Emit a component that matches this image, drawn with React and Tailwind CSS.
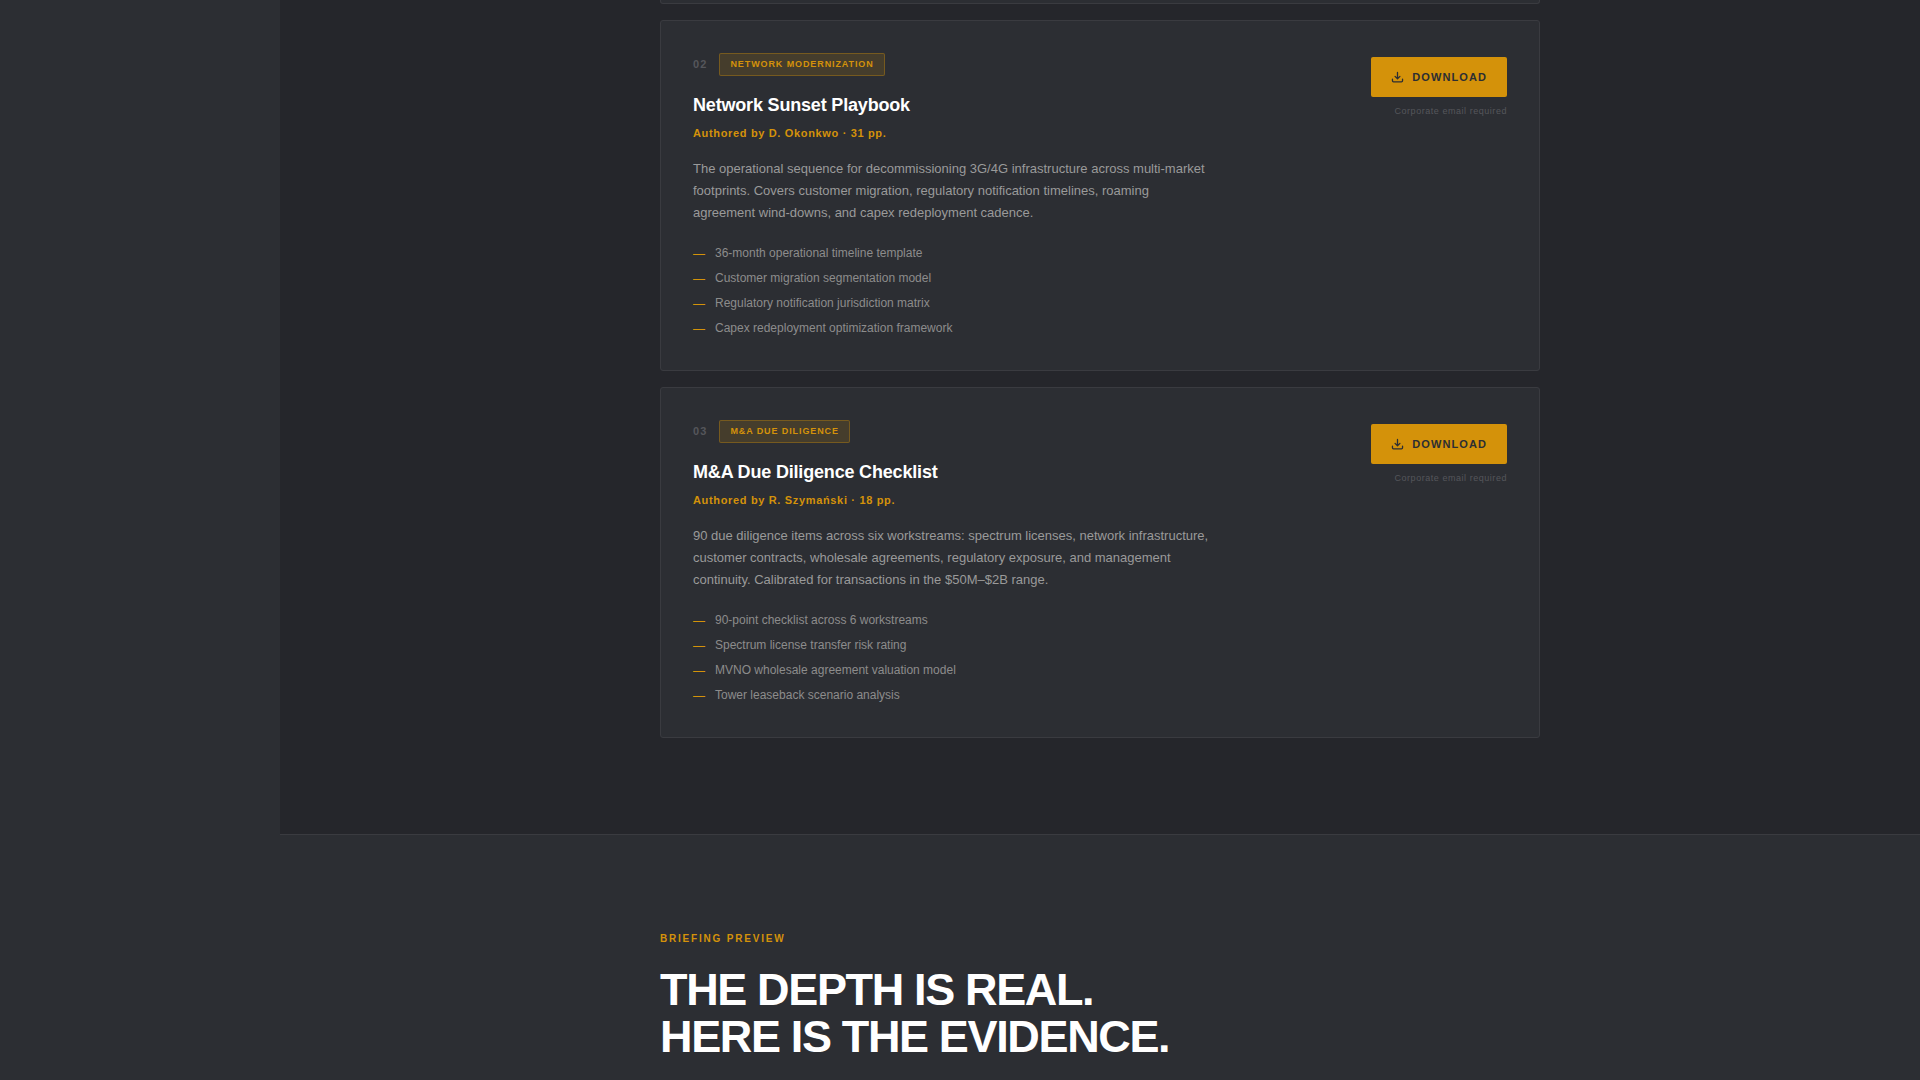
import React from 'react';

const playbooks = [
  {
    id: '02',
    tag: 'Network Modernization',
    title: 'Network Sunset Playbook',
    author: 'D. Okonkwo',
    pages: 31,
    description:
      'The operational sequence for decommissioning 3G/4G infrastructure across multi-market footprints. Covers customer migration, regulatory notification timelines, roaming agreement wind-downs, and capex redeployment cadence.',
    items: [
      '36-month operational timeline template',
      'Customer migration segmentation model',
      'Regulatory notification jurisdiction matrix',
      'Capex redeployment optimization framework'
    ]
  },
  {
    id: '03',
    tag: 'M&A Due Diligence',
    title: 'M&A Due Diligence Checklist',
    author: 'R. Szymański',
    pages: 18,
    description:
      '90 due diligence items across six workstreams: spectrum licenses, network infrastructure, customer contracts, wholesale agreements, regulatory exposure, and management continuity. Calibrated for transactions in the $50M–$2B range.',
    items: [
      '90-point checklist across 6 workstreams',
      'Spectrum license transfer risk rating',
      'MVNO wholesale agreement valuation model',
      'Tower leaseback scenario analysis'
    ]
  }
];

function DownloadIcon() {
  return (
    <svg
      width="13"
      height="13"
      viewBox="0 0 16 16"
      fill="none"
      stroke="currentColor"
      strokeWidth="1.6"
      strokeLinecap="round"
      strokeLinejoin="round"
      aria-hidden="true"
    >
      <path d="M8 1.8v7.6M5 6.6l3 3 3-3" />
      <path d="M1.8 10v2a1.3 1.3 0 0 0 1.3 1.3h9.8a1.3 1.3 0 0 0 1.3-1.3v-2" />
    </svg>
  );
}

function PlaybookCard({ book }) {
  return (
    <article className="flex items-start justify-between gap-8 rounded-[3px] border border-[#3a3b40] bg-[#2c2e33] p-8">
      <div>
        <div className="flex items-center gap-3">
          <span className="text-[11px] leading-[13px] font-bold tracking-widest text-[#55565b]">{book.id}</span>
          <span className="rounded-[2px] border border-[#d4920a]/35 bg-[#d4920a]/15 px-[10px] py-1 text-[9px] leading-[13px] font-bold tracking-widest text-[#d4920a] uppercase">
            {book.tag}
          </span>
        </div>
        <h3 className="mt-4 text-[18px] leading-[27px] font-bold tracking-[-0.01em] text-white">{book.title}</h3>
        <p className="mt-[6px] text-[11px] leading-[17px] font-bold tracking-[0.06em] text-[#d4920a]">
          Authored by {book.author} · {book.pages} pp.
        </p>
        <p className="mt-4 max-w-[520px] text-[13px] leading-[22px] text-[#9a9a9a]">{book.description}</p>
        <ul className="mt-5 flex flex-col gap-[6px] text-[12px] leading-[19px] text-[#8c8c8c]">
          {book.items.map((item) => (
            <li key={item} className="flex gap-[10px]">
              <span className="pt-px leading-[18px] text-[#d4920a]">—</span>
              {item}
            </li>
          ))}
        </ul>
      </div>

      <div className="flex shrink-0 flex-col items-end gap-2 pt-1">
        <button
          type="button"
          className="flex h-10 items-center gap-2 rounded-[2px] bg-[#d4920a] px-5 text-[11px] font-bold tracking-widest text-[#2c2e33] uppercase"
        >
          <DownloadIcon />
          Download
        </button>
        <span className="text-[9px] leading-3 tracking-[0.06em] text-[#55565b]">Corporate email required</span>
      </div>
    </article>
  );
}

export default function App() {
  return (
    <div className="flex min-h-screen bg-[#2c2e33] font-['Liberation_Sans',Arial,sans-serif]">
      {/* Sidebar column */}
      <aside className="w-70 shrink-0"></aside>

      <main className="min-w-0 flex-1">
        <section className="border-b border-[#3a3b40] bg-[#25262b] pb-24">
          <div className="mx-auto flex max-w-[880px] flex-col gap-4">
            {/* Lower edge of the previous card */}
            <div className="h-1 rounded-b-[3px] border-x border-b border-[#3a3b40] bg-[#2c2e33]"></div>
            {playbooks.map((book) => (
              <PlaybookCard key={book.id} book={book} />
            ))}
          </div>
        </section>

        <section className="pt-24">
          <div className="mx-auto max-w-[880px]">
            <p className="text-[10px] leading-[15px] font-bold tracking-[0.18em] text-[#d4920a] uppercase">Briefing Preview</p>
            <h2 className="mt-5 text-[45px] leading-[47px] font-bold tracking-[-0.03em] text-white uppercase">
              The depth is real.
              <br />
              Here is the evidence.
            </h2>
          </div>
        </section>
      </main>
    </div>
  );
}
